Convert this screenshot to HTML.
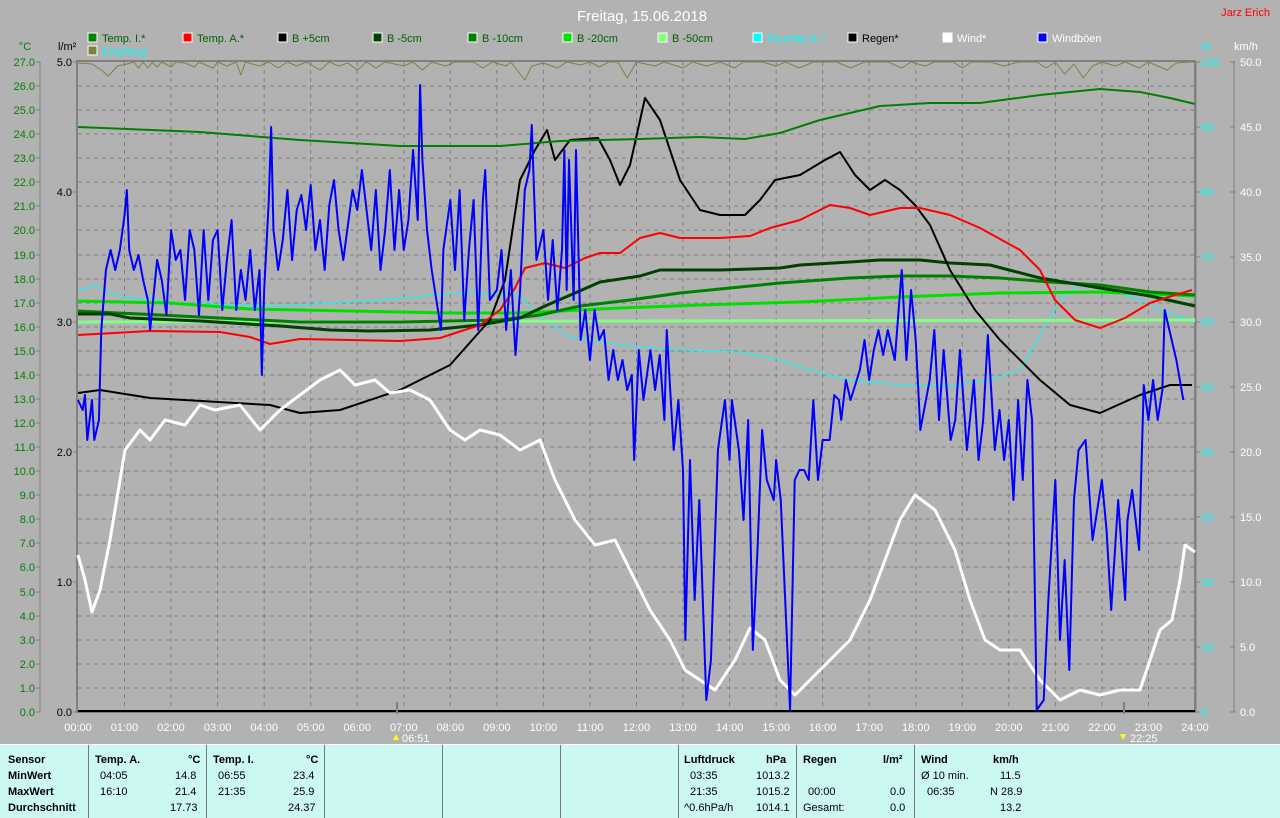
<!DOCTYPE html>
<html><head><meta charset="utf-8"><style>
html,body{margin:0;padding:0;width:1280px;height:817px;overflow:hidden;background:#b2b2b2;font-family:"Liberation Sans",sans-serif}
svg{display:block}
.tb{position:absolute;left:0;top:744px;width:1280px;height:73px;background:#ccf8f4;border-top:1px solid #fff}
.tb div{position:absolute;font-size:11px;color:#000}
.b{font-weight:bold}
.sep{position:absolute;top:0;width:1px;height:73px;background:#777}
</style></head><body>
<svg width="1280" height="744" style="position:absolute;left:0;top:0" font-family="Liberation Sans, sans-serif" font-size="11">
<text x="642" y="21" fill="#fff" font-size="15" text-anchor="middle">Freitag, 15.06.2018</text>
<text x="1270" y="16" fill="#f00" font-size="11" text-anchor="end">Jarz Erich</text>
<g stroke="#fff" stroke-width="1">
<rect x="88" y="33" width="9" height="9" fill="#008000"/><rect x="183" y="33" width="9" height="9" fill="#f00"/>
<rect x="278" y="33" width="9" height="9" fill="#000"/><rect x="373" y="33" width="9" height="9" fill="#004000"/>
<rect x="468" y="33" width="9" height="9" fill="#008000"/><rect x="563" y="33" width="9" height="9" fill="#00e000"/>
<rect x="658" y="33" width="9" height="9" fill="#80ff80"/><rect x="753" y="33" width="9" height="9" fill="#0ff"/>
<rect x="848" y="33" width="9" height="9" fill="#000"/><rect x="943" y="33" width="9" height="9" fill="#fff"/>
<rect x="1038" y="33" width="9" height="9" fill="#00f"/><rect x="88" y="46" width="9" height="9" fill="#808040"/>
</g>
<g font-size="11">
<text x="102" y="42" fill="#006000">Temp. I.*</text><text x="197" y="42" fill="#006000">Temp. A.*</text>
<text x="292" y="42" fill="#006000">B +5cm</text><text x="387" y="42" fill="#006000">B -5cm</text>
<text x="482" y="42" fill="#006000">B -10cm</text><text x="577" y="42" fill="#006000">B -20cm</text>
<text x="672" y="42" fill="#006000">B -50cm</text><text x="767" y="42" fill="#0ff">Feuchte A.*</text>
<text x="862" y="42" fill="#000">Regen*</text><text x="957" y="42" fill="#fff">Wind*</text>
<text x="1052" y="42" fill="#fff">Windböen</text><text x="102" y="55" fill="#0ff">Empfang</text>
</g>
<text x="25" y="50" fill="#008000" font-size="11" text-anchor="middle">°C</text>
<text x="58" y="50" fill="#000">l/m²</text>
<text x="1201" y="50" fill="#0ff" font-size="11">%</text>
<text x="1234" y="50" fill="#fff">km/h</text>
<g stroke="#808080" stroke-dasharray="4,4" stroke-width="1">
<path d="M78 86H1194M78 110H1194M78 134H1194M78 158H1194M78 182H1194M78 206H1194M78 230H1194M78 255H1194M78 279H1194M78 303H1194M78 327H1194M78 351H1194M78 375H1194M78 399H1194M78 423H1194M78 447H1194M78 471H1194M78 495H1194M78 519H1194M78 543H1194M78 567H1194M78 592H1194M78 616H1194M78 640H1194M78 664H1194M78 688H1194"/>
<path d="M124.5 62V712M171 62V712M217.6 62V712M264.2 62V712M310.7 62V712M357.2 62V712M403.8 62V712M450.3 62V712M496.9 62V712M543.4 62V712M590 62V712M636.5 62V712M683 62V712M729.6 62V712M776.2 62V712M822.6 62V712M869.2 62V712M915.8 62V712M962.3 62V712M1008.8 62V712M1055.4 62V712M1102 62V712M1148.5 62V712"/>
</g>
<g stroke="#808080" stroke-width="1" fill="none">
<path d="M40 62V712"/><path d="M1234 62V712"/>
<path d="M36 62h4M36 86h4M36 110h4M36 134h4M36 158h4M36 182h4M36 206h4M36 230h4M36 255h4M36 279h4M36 303h4M36 327h4M36 351h4M36 375h4M36 399h4M36 423h4M36 447h4M36 471h4M36 495h4M36 519h4M36 543h4M36 567h4M36 592h4M36 616h4M36 640h4M36 664h4M36 688h4M36 712h4"/>
<path d="M73 62h4M73 192h4M73 322h4M73 452h4M73 582h4M73 712h4"/>
<path d="M1196 62h4M1196 127h4M1196 192h4M1196 257h4M1196 322h4M1196 387h4M1196 452h4M1196 517h4M1196 582h4M1196 647h4M1196 712h4"/>
<path d="M1230 62h5M1230 127h5M1230 192h5M1230 257h5M1230 322h5M1230 387h5M1230 452h5M1230 517h5M1230 582h5M1230 647h5M1230 712h5"/>
</g>
<rect x="77" y="61" width="1118" height="651" fill="none" stroke="#808080" stroke-width="2"/>
<line x1="1196" y1="62" x2="1196" y2="712" stroke="#808080" stroke-width="1"/>
<line x1="78" y1="711" x2="1195" y2="711" stroke="#000" stroke-width="2"/>
<g fill="#008000" text-anchor="end" font-size="11">
<text x="35" y="66">27.0</text><text x="35" y="90">26.0</text><text x="35" y="114">25.0</text><text x="35" y="138">24.0</text><text x="35" y="162">23.0</text><text x="35" y="186">22.0</text><text x="35" y="210">21.0</text><text x="35" y="234">20.0</text><text x="35" y="259">19.0</text><text x="35" y="283">18.0</text><text x="35" y="307">17.0</text><text x="35" y="331">16.0</text><text x="35" y="355">15.0</text><text x="35" y="379">14.0</text><text x="35" y="403">13.0</text><text x="35" y="427">12.0</text><text x="35" y="451">11.0</text><text x="35" y="475">10.0</text><text x="35" y="499">9.0</text><text x="35" y="523">8.0</text><text x="35" y="547">7.0</text><text x="35" y="571">6.0</text><text x="35" y="596">5.0</text><text x="35" y="620">4.0</text><text x="35" y="644">3.0</text><text x="35" y="668">2.0</text><text x="35" y="692">1.0</text><text x="35" y="716">0.0</text>
</g>
<g fill="#000" text-anchor="end"><text x="72" y="66">5.0</text><text x="72" y="196">4.0</text><text x="72" y="326">3.0</text><text x="72" y="456">2.0</text><text x="72" y="586">1.0</text><text x="72" y="716">0.0</text></g>
<g fill="#0ff"><text x="1201" y="66">100</text><text x="1201" y="131">90</text><text x="1201" y="196">80</text><text x="1201" y="261">70</text><text x="1201" y="326">60</text><text x="1201" y="391">50</text><text x="1201" y="456">40</text><text x="1201" y="521">30</text><text x="1201" y="586">20</text><text x="1201" y="651">10</text><text x="1201" y="716">0</text></g>
<g fill="#fff"><text x="1240" y="66">50.0</text><text x="1240" y="131">45.0</text><text x="1240" y="196">40.0</text><text x="1240" y="261">35.0</text><text x="1240" y="326">30.0</text><text x="1240" y="391">25.0</text><text x="1240" y="456">20.0</text><text x="1240" y="521">15.0</text><text x="1240" y="586">10.0</text><text x="1240" y="651">5.0</text><text x="1240" y="716">0.0</text></g>
<g fill="#fff" text-anchor="middle"><text x="78" y="731">00:00</text><text x="124.5" y="731">01:00</text><text x="171" y="731">02:00</text><text x="217.6" y="731">03:00</text><text x="264.2" y="731">04:00</text><text x="310.7" y="731">05:00</text><text x="357.2" y="731">06:00</text><text x="403.8" y="731">07:00</text><text x="450.3" y="731">08:00</text><text x="496.9" y="731">09:00</text><text x="543.4" y="731">10:00</text><text x="590" y="731">11:00</text><text x="636.5" y="731">12:00</text><text x="683" y="731">13:00</text><text x="729.6" y="731">14:00</text><text x="776.2" y="731">15:00</text><text x="822.6" y="731">16:00</text><text x="869.2" y="731">17:00</text><text x="915.8" y="731">18:00</text><text x="962.3" y="731">19:00</text><text x="1008.8" y="731">20:00</text><text x="1055.4" y="731">21:00</text><text x="1102" y="731">22:00</text><text x="1148.5" y="731">23:00</text><text x="1195" y="731">24:00</text></g>
<rect x="396" y="702" width="2" height="12" fill="#808080"/><rect x="1123" y="702" width="2" height="12" fill="#808080"/>
<path d="M396 734l3 6h-6z" fill="#ff0"/><text x="402" y="742" fill="#fff">06:51</text>
<path d="M1123 740l3-6h-6z" fill="#ff0"/><text x="1130" y="742" fill="#fff">22:25</text>
<g fill="none" stroke-linejoin="round">
<g transform="translate(78,0) scale(46.54,1)">
<polyline vector-effect="non-scaling-stroke" stroke="#808040" stroke-width="1" points="0,63 0.3,64 0.5,70 0.65,76 0.85,66 1.05,64 1.2,62 1.3,68 1.4,62 1.5,68 1.6,62 1.7,67 1.8,62 2,67 2.1,62 2.3,63 2.5,67 2.6,62 2.9,68 3,62 3.2,66 3.4,62 3.5,75 3.6,62 3.9,66 4.1,62 4.3,68 4.5,62 4.7,66 4.9,62 5.2,70 5.4,62 5.6,66 5.8,63 6,70 6.2,62 6.4,68 6.6,62 7,66 7.2,62 7.4,70 7.6,62 7.9,66 8.1,62 8.5,62 8.7,68 8.9,62 9.2,66 9.3,62 9.6,80 9.75,66 10,63 10.3,68 10.5,62 10.8,65 11,62 11.2,67 11.4,62 11.6,62 11.8,78 12,62 12.4,66 12.6,62 13,68 13.2,62 13.5,66 13.8,62 14.1,68 14.3,62 14.7,62 15,66 15.2,62 15.5,68 15.8,62 16.3,62 16.6,68 16.9,62 17.4,62 17.7,68 17.9,62 18.2,66 18.4,62 18.8,62 19,68 19.2,62 19.6,62 19.9,66 20.2,62 20.6,62 20.8,68 21,62 21.2,74 21.4,64 21.6,78 21.8,66 22,62 22.3,66 22.5,62 22.8,68 23,62 23.4,70 23.6,63 23.9,62 24,62"/>
</g>
<polyline stroke="#0ff" stroke-width="1" points="78,290 95,286 120,296 180,303 280,306 380,300 470,292 520,296 545,320 570,337 620,345 680,350 740,352 780,360 810,370 850,380 900,385 950,386 990,380 1020,370 1040,335 1060,300 1080,285 1110,290 1140,300 1160,310 1195,322"/>
<polyline stroke="#80ff80" stroke-width="3" points="78,322 1195,320"/>
<polyline stroke="#00e000" stroke-width="3" points="78,301 170,303 250,309 350,311 450,313 520,313 560,311 620,308 700,305 800,302 900,297 1000,293 1100,292 1195,296"/>
<polyline stroke="#008000" stroke-width="3" points="78,311 200,317 300,322 400,322 500,320 540,315 580,306 630,300 680,293 730,288 780,283 850,278 900,276 950,276 1000,278 1050,282 1100,285 1150,292 1195,295"/>
<polyline stroke="#004000" stroke-width="3" points="78,314 110,314 130,318 200,321 280,326 330,330 370,331 430,330 480,325 520,318 545,306 575,293 600,282 640,276 660,270 720,270 780,268 800,265 850,262 880,260 920,260 950,263 990,265 1040,278 1100,288 1150,296 1195,306"/>
<polyline stroke="#000" stroke-width="2" points="78,393 100,390 150,398 270,405 300,413 340,410 400,390 450,365 490,320 505,280 520,180 535,150 547,130 555,160 570,140 598,138 610,160 620,185 630,165 645,98 660,120 680,180 700,210 720,215 745,215 760,200 775,180 800,175 825,160 840,152 855,175 870,190 885,180 900,190 915,205 930,225 950,270 975,310 1000,340 1040,380 1070,405 1100,413 1140,395 1170,385 1192,385"/>
<polyline stroke="#f00" stroke-width="2" points="78,335 150,331 220,332 250,337 270,344 300,339 350,340 400,341 440,338 480,325 500,310 515,288 525,268 545,263 565,268 585,258 600,253 620,253 640,238 660,233 680,238 720,238 750,236 770,228 800,220 830,205 850,208 870,215 900,208 920,208 950,215 980,228 1020,250 1040,270 1055,300 1075,320 1100,328 1125,318 1150,303 1175,295 1192,290"/>
<polyline stroke="#008000" stroke-width="2" points="78,127 200,132 300,140 400,146 500,146 560,141 640,139 700,137 745,139 780,133 820,120 880,106 930,103 980,103 1040,95 1100,89 1140,92 1170,98 1195,104"/>
<polyline stroke="#fff" stroke-width="3" points="78,555 85,580 92,612 100,590 110,540 125,450 140,430 150,440 165,420 185,425 200,405 215,410 240,405 260,430 280,410 300,395 320,380 340,370 355,385 375,380 390,393 410,390 430,400 450,430 465,440 480,430 500,435 520,450 540,440 555,480 575,520 595,545 615,540 630,570 650,610 670,640 685,670 700,680 715,690 735,660 750,628 765,640 780,680 795,695 810,680 830,660 850,640 870,600 885,560 900,520 915,495 935,510 955,550 970,600 985,640 1000,650 1020,650 1040,680 1060,700 1080,690 1100,695 1120,690 1140,690 1150,660 1160,630 1172,620 1180,580 1185,545 1195,552"/>
<g transform="translate(78,0) scale(46.54,1)">
<polyline vector-effect="non-scaling-stroke" stroke="#00f" stroke-width="2" points="0,400 0.1,410 0.15,395 0.2,440 0.3,400 0.35,440 0.45,420 0.5,330 0.6,270 0.7,250 0.8,270 0.9,250 1,215 1.05,190 1.1,250 1.2,270 1.3,255 1.4,280 1.5,300 1.55,330 1.7,260 1.8,280 1.9,315 2,230 2.1,260 2.2,250 2.3,300 2.4,230 2.5,250 2.6,315 2.7,230 2.8,300 2.9,240 3,230 3.1,310 3.2,260 3.3,220 3.4,310 3.5,270 3.6,300 3.7,250 3.8,310 3.9,270 3.95,375 4,290 4.1,200 4.15,127 4.2,230 4.3,270 4.4,240 4.5,190 4.6,260 4.7,210 4.8,195 4.9,230 5,185 5.1,250 5.2,220 5.3,270 5.4,205 5.5,180 5.6,230 5.7,260 5.9,190 6,210 6.1,170 6.2,210 6.3,250 6.4,190 6.5,270 6.6,230 6.7,170 6.8,250 6.9,190 7,250 7.1,220 7.2,150 7.3,220 7.35,85 7.4,160 7.5,230 7.6,270 7.7,300 7.8,330 7.85,250 8,200 8.1,270 8.2,190 8.3,320 8.4,250 8.5,200 8.6,330 8.7,200 8.75,170 8.85,300 9,290 9.1,250 9.2,330 9.3,270 9.4,355 9.5,290 9.6,190 9.7,170 9.75,125 9.85,260 10,230 10.1,300 10.2,240 10.3,310 10.4,250 10.45,150 10.5,290 10.55,160 10.65,300 10.7,150 10.8,340 10.9,310 11,360 11.1,310 11.2,340 11.3,330 11.4,380 11.5,350 11.6,380 11.7,360 11.8,390 11.9,375 11.95,460 12.05,350 12.15,400 12.3,350 12.4,390 12.5,355 12.6,420 12.65,330 12.8,450 12.9,400 13,470 13.05,640 13.15,460 13.25,600 13.35,500 13.5,700 13.6,660 13.75,450 13.9,400 14,460 14.05,400 14.2,450 14.3,520 14.4,420 14.5,650 14.6,550 14.7,430 14.8,480 14.95,500 15,460 15.1,500 15.3,710 15.4,480 15.5,470 15.6,470 15.7,480 15.8,400 15.9,480 16,440 16.15,440 16.25,395 16.35,400 16.4,420 16.5,380 16.6,400 16.8,370 16.9,340 17,380 17.1,350 17.2,330 17.3,355 17.4,330 17.55,360 17.65,300 17.7,270 17.8,360 17.9,290 18,340 18.1,430 18.3,380 18.4,330 18.5,420 18.6,350 18.75,440 18.85,420 18.95,350 19.1,450 19.25,380 19.35,460 19.45,420 19.55,335 19.7,450 19.8,410 19.9,460 20,420 20.1,500 20.2,400 20.3,480 20.4,380 20.5,420 20.6,710 20.75,700 20.85,600 21,480 21.1,640 21.2,560 21.3,670 21.4,500 21.5,450 21.65,440 21.8,540 22,480 22.1,530 22.2,610 22.35,500 22.5,600 22.55,520 22.65,490 22.8,550 22.9,385 23,420 23.1,380 23.2,420 23.3,390 23.35,310 23.45,330 23.6,360 23.75,400"/>
</g>
</g>
</svg>
<div class="tb">
<div class="sep" style="left:88px"></div><div class="sep" style="left:206px"></div><div class="sep" style="left:324px"></div><div class="sep" style="left:442px"></div><div class="sep" style="left:560px"></div><div class="sep" style="left:678px"></div><div class="sep" style="left:796px"></div><div class="sep" style="left:914px"></div>
<div class="b" style="left:8px;top:9px">Sensor</div><div class="b" style="left:8px;top:25px">MinWert</div><div class="b" style="left:8px;top:41px">MaxWert</div><div class="b" style="left:8px;top:57px">Durchschnitt</div>
<div class="b" style="left:95px;top:9px">Temp. A.</div><div class="b" style="left:188px;top:9px">°C</div>
<div style="left:100px;top:25px">04:05</div><div style="left:175px;top:25px">14.8</div>
<div style="left:100px;top:41px">16:10</div><div style="left:175px;top:41px">21.4</div>
<div style="left:170px;top:57px">17.73</div>
<div class="b" style="left:213px;top:9px">Temp. I.</div><div class="b" style="left:306px;top:9px">°C</div>
<div style="left:218px;top:25px">06:55</div><div style="left:293px;top:25px">23.4</div>
<div style="left:218px;top:41px">21:35</div><div style="left:293px;top:41px">25.9</div>
<div style="left:288px;top:57px">24.37</div>
<div class="b" style="left:684px;top:9px">Luftdruck</div><div class="b" style="left:766px;top:9px">hPa</div>
<div style="left:690px;top:25px">03:35</div><div style="left:756px;top:25px">1013.2</div>
<div style="left:690px;top:41px">21:35</div><div style="left:756px;top:41px">1015.2</div>
<div style="left:684px;top:57px">^0.6hPa/h</div><div style="left:756px;top:57px">1014.1</div>
<div class="b" style="left:803px;top:9px">Regen</div><div class="b" style="left:883px;top:9px">l/m²</div>
<div style="left:808px;top:41px">00:00</div><div style="left:890px;top:41px">0.0</div>
<div style="left:803px;top:57px">Gesamt:</div><div style="left:890px;top:57px">0.0</div>
<div class="b" style="left:921px;top:9px">Wind</div><div class="b" style="left:993px;top:9px">km/h</div>
<div style="left:921px;top:25px">Ø 10 min.</div><div style="left:1000px;top:25px">11.5</div>
<div style="left:927px;top:41px">06:35</div><div style="left:990px;top:41px">N 28.9</div>
<div style="left:1000px;top:57px">13.2</div>
</div>
</body></html>
